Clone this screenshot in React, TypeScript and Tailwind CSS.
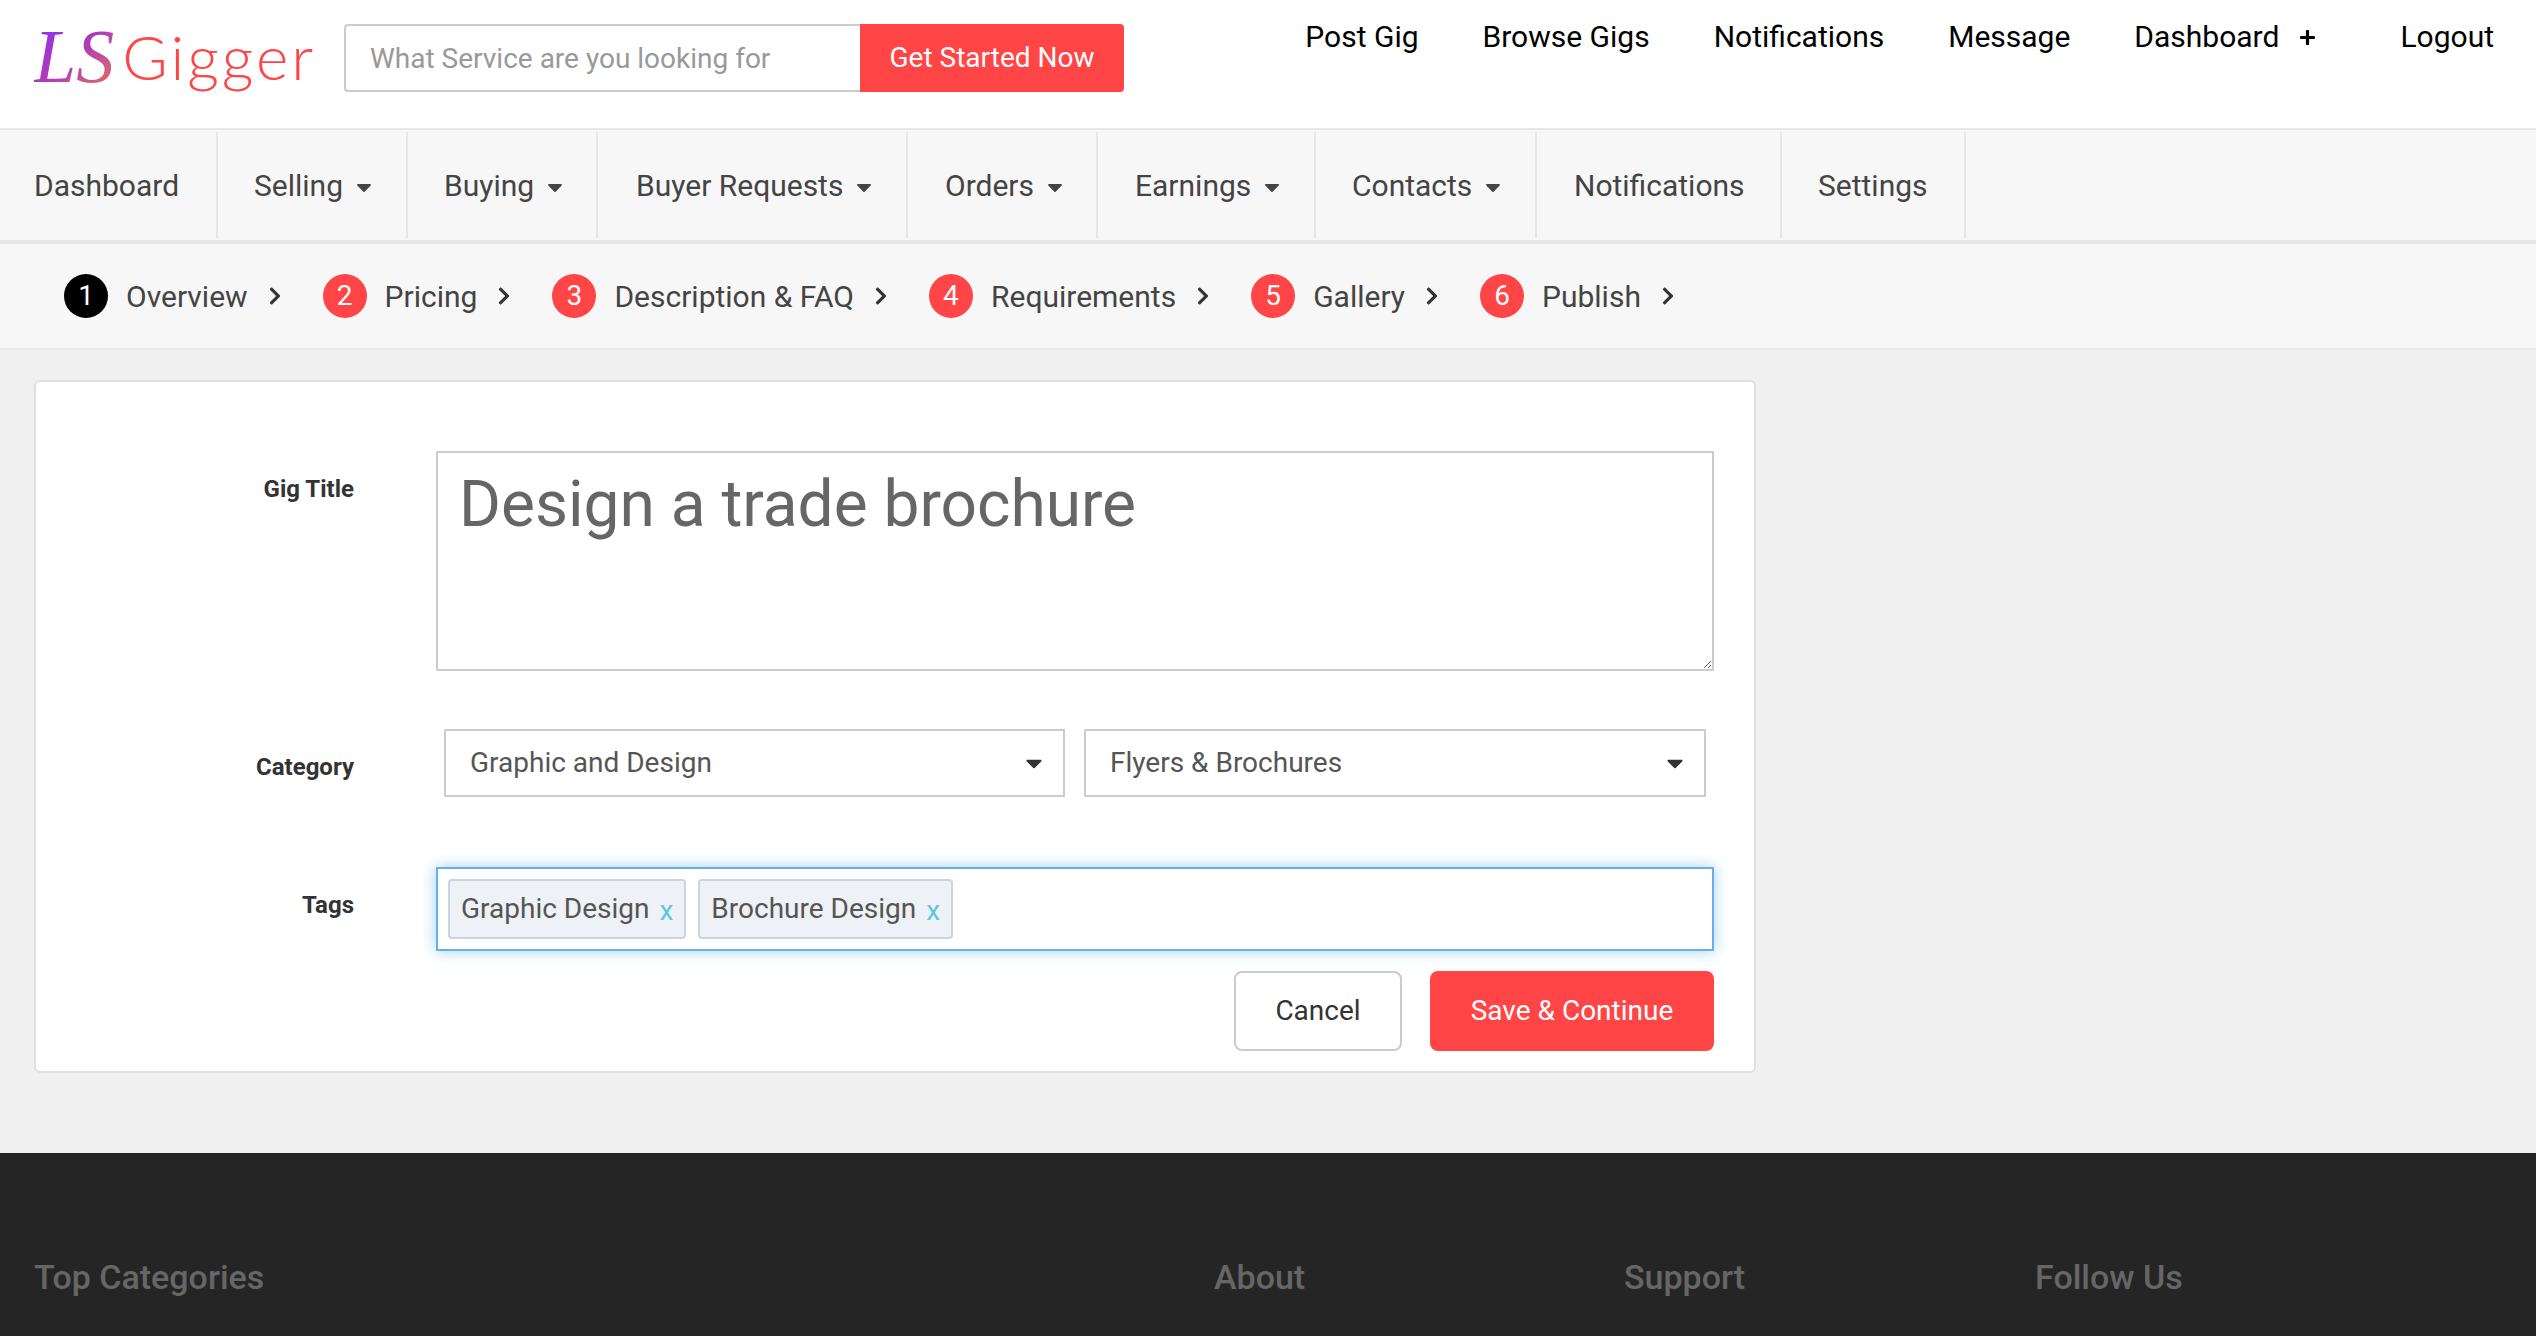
import React from 'react';
import { FaCaretDown, FaChevronRight, FaPlus } from 'react-icons/fa';

const TOP_LINKS = ['Post Gig', 'Browse Gigs', 'Notifications', 'Message'];

const NAV_ITEMS = [
  { label: 'Dashboard', caret: false, width: 'w-[218px] pl-[34px]' },
  { label: 'Selling', caret: true, width: 'w-[190px] pl-[36px]' },
  { label: 'Buying', caret: true, width: 'w-[190px] pl-[36px]' },
  { label: 'Buyer Requests', caret: true, width: 'w-[310px] pl-[38px]' },
  { label: 'Orders', caret: true, width: 'w-[190px] pl-[37px]' },
  { label: 'Earnings', caret: true, width: 'w-[218px] pl-[37px]' },
  { label: 'Contacts', caret: true, width: 'w-[221px] pl-[36px]' },
  { label: 'Notifications', caret: false, width: 'w-[245px] pl-[37px]' },
  { label: 'Settings', caret: false, width: 'w-[184px] pl-[36px]' },
];

const STEPS = ['Overview', 'Pricing', 'Description & FAQ', 'Requirements', 'Gallery', 'Publish'];

function Select({ value, className }: { value: string; className: string }) {
  return (
    <div className={`flex h-[68px] items-center justify-between border-2 border-[#ccc] bg-white pl-[24px] pr-[16px] text-[28px] text-[#555] ${className}`}>
      <span>{value}</span>
      <FaCaretDown className="text-[#333]" size={26} />
    </div>
  );
}

function Tag({ label }: { label: string }) {
  return (
    <div className="flex h-[60px] items-center gap-[10px] rounded-[4px] border-2 border-[#ccd3e0] bg-[#eef1f6] px-[11px] text-[28px] text-[#555]">
      <span>{label}</span>
      <span className="mt-[3px] text-[#5bc8dc]">x</span>
    </div>
  );
}

export default function App() {
  return (
    <div className="flex h-[1336px] flex-col overflow-hidden bg-[#f0f0f0] font-['Roboto',sans-serif]">
      {/* top bar */}
      <header className="flex h-[130px] shrink-0 items-start border-b-2 border-[#e6e6e6] bg-white">
        <div className="ml-[34px] mt-[18px] flex h-[76px] w-[310px] items-center">
          <span className="bg-gradient-to-br from-[#8b24f5] via-[#b23ab5] to-[#f0702a] bg-clip-text pr-[6px] font-['Liberation_Serif',serif] text-[76px] leading-none text-transparent italic">
            LS
          </span>
          <span className="ml-[2px] font-['Lato',sans-serif] text-[62px] leading-none font-light tracking-[3px] text-[#ff4545]">
            Gigger
          </span>
        </div>
        <div className="mt-[24px] flex h-[68px]">
          <input
            placeholder="What Service are you looking for"
            className="h-full w-[516px] rounded-l-[4px] border-2 border-r-0 border-[#ccc] bg-white px-[24px] text-[28px] outline-none placeholder:text-[#999]"
          />
          <button className="h-full w-[264px] rounded-r-[4px] bg-[#ff4545] text-center text-[28px] text-white">
            Get Started Now
          </button>
        </div>
        <nav className="ml-auto mt-[16px] flex items-center pr-[42px] text-[30px] leading-[42px] text-black">
          {TOP_LINKS.map((link) => (
            <a key={link} className="mr-[64px]">
              {link}
            </a>
          ))}
          <a className="flex items-center">
            Dashboard
            <FaPlus className="ml-[20px]" size={17} />
          </a>
          <a className="ml-[84px]">Logout</a>
        </nav>
      </header>

      {/* section nav */}
      <nav className="flex h-[114px] shrink-0 border-b-4 border-[#e6e6e6] bg-[#f7f7f7] py-[2px] text-[30px] text-[#444]">
        {NAV_ITEMS.map((item) => (
          <div key={item.label} className={`flex items-center border-r-2 border-[#e6e6e6] ${item.width}`}>
            <span>{item.label}</span>
            {item.caret && <FaCaretDown className="ml-[9px] mt-[3px]" size={24} />}
          </div>
        ))}
      </nav>

      {/* wizard steps */}
      <div className="flex h-[106px] shrink-0 items-center border-b-2 border-[#e9e9e9] bg-[#f7f7f7] pl-[64px] text-[30px] text-[#444]">
        {STEPS.map((step, i) => (
          <div key={step} className="mr-[38px] flex items-center">
            <span className={`flex h-[44px] w-[44px] items-center justify-center rounded-full text-[28px] text-white ${i === 0 ? 'bg-black' : 'bg-[#ff4545]'}`}>
              {i + 1}
            </span>
            <span className="ml-[18px]">{step}</span>
            <FaChevronRight className="ml-[17px] text-[#333]" size={20} />
          </div>
        ))}
      </div>

      {/* form card */}
      <main className="mx-[34px] mt-[30px] h-[693px] w-[1722px] shrink-0 rounded-[6px] border-2 border-[#e0e0e0] bg-white pr-[40px] pt-[69px]">
        <div className="flex">
          <label className="mt-[20px] w-[318px] text-right text-[24px] font-bold text-[#333]">Gig Title</label>
          <textarea
            defaultValue="Design a trade brochure"
            className="ml-[82px] h-[220px] flex-1 resize border-2 border-[#ccc] px-[21px] py-[14px] text-[64px] leading-[76px] text-[#666] outline-none"
          />
        </div>
        <div className="mt-[58px] flex">
          <label className="mt-[20px] w-[318px] text-right text-[24px] font-bold text-[#333]">Category</label>
          <div className="ml-[90px] flex gap-[19px]">
            <Select value="Graphic and Design" className="w-[621px]" />
            <Select value="Flyers & Brochures" className="w-[622px]" />
          </div>
        </div>
        <div className="mt-[70px] flex">
          <label className="mt-[20px] w-[318px] text-right text-[24px] font-bold text-[#333]">Tags</label>
          <div className="ml-[82px] flex h-[84px] flex-1 items-center gap-[12px] border-2 border-[#66afe9] bg-white px-[10px] shadow-[0_0_14px_rgba(102,175,233,0.6)]">
            <Tag label="Graphic Design" />
            <Tag label="Brochure Design" />
          </div>
        </div>
        <div className="mt-[20px] flex justify-end gap-[28px] text-[28px]">
          <button className="h-[80px] w-[168px] rounded-[8px] border-2 border-[#ccc] bg-white text-[#333]">Cancel</button>
          <button className="h-[80px] w-[284px] rounded-[8px] bg-[#ff4545] text-white">Save &amp; Continue</button>
        </div>
      </main>

      {/* footer */}
      <footer className="mt-[80px] flex-1 bg-[#252525] pl-[34px] pt-[100px] text-[34px] font-medium text-[#666]">
        <div className="flex leading-[48px]">
          <h4 className="w-[1180px]">Top Categories</h4>
          <h4 className="w-[410px]">About</h4>
          <h4 className="w-[411px]">Support</h4>
          <h4>Follow Us</h4>
        </div>
      </footer>
    </div>
  );
}
